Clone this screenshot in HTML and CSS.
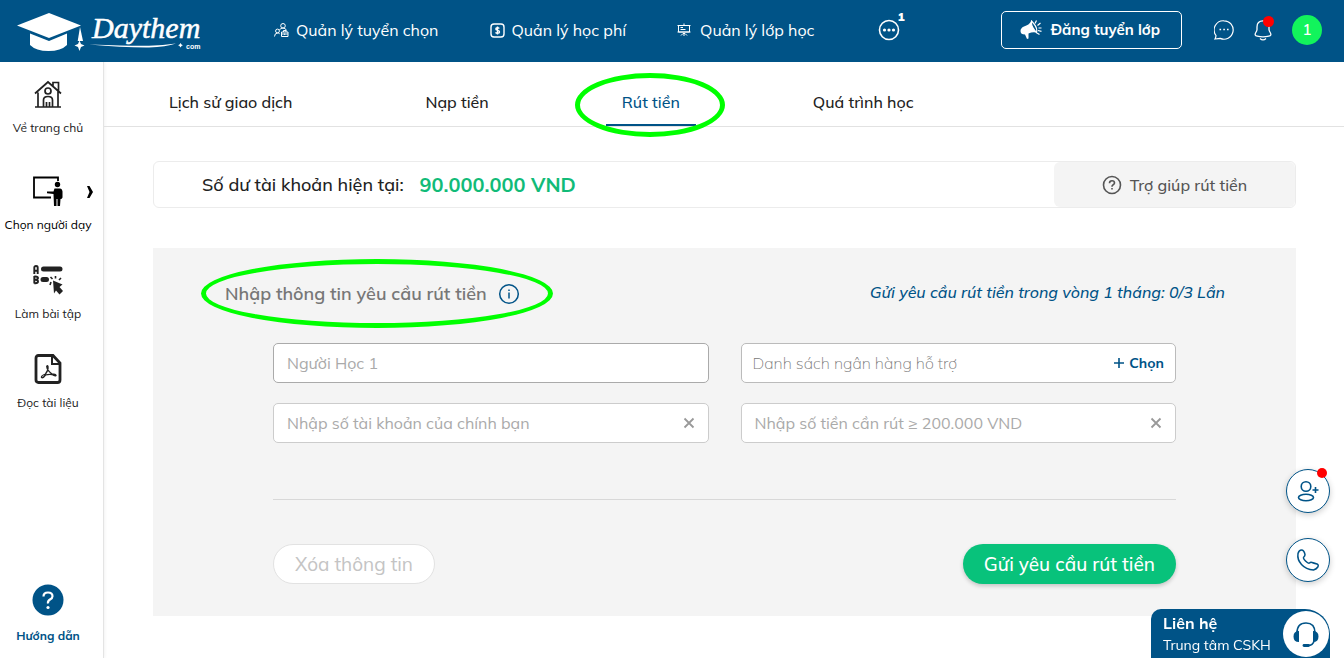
FILE: index.html
```html
<!DOCTYPE html>
<html lang="vi">
<head>
<meta charset="utf-8">
<meta name="viewport" content="width=device-width, initial-scale=1">
<title>Daythem.com - Rút tiền</title>
<link rel="stylesheet" href="styles.css">
</head>
<body>
<header class="topbar">
  <a class="logo" href="#" aria-label="Daythem.com">
    <svg class="logo-art" width="190" height="44" viewBox="14 6 190 44" fill="#fff">
      <path d="M17 23.500 49 11l32 12.500L49 36z"/>
      <path d="M30 31.500l19 7.500 18-7.500V43q-6 6-18.500 6T30 43z"/>
      <path d="M80 25l-2.300 14h5.300z"/>
      <path d="M79.500 38.500l1.500 3.500 3.500 1.500-3.500 1.500-1.500 4-1.500-4-3.500-1.500 3.500-1.500z"/>
      <path d="M89 42.500q42 1.500 60 1.200 14-.4 27-2.200-10 3.500-27 4-25 .2-60-3zM180.500 41l1 1.600 1.400.6-1.400.7-1 1.600-1-1.600-1.400-.7 1.400-.6z"/>
      <text class="logo-name" x="92" y="36">Daythem</text>
      <text class="logo-com" x="186" y="47">com</text>
    </svg>
  </a>
  <nav class="mainnav">
    <a href="#"><svg width="15" height="15" viewBox="0 0 15 15" fill="none" stroke="#fff"><circle cx="9" cy="2.800" r="2.300"/><circle cx="3.500" cy="8" r="1.900"/><path d="M.5 13.500q.2-3.500 3-3.500 1.400 0 2.200.8M5.500 7q.8-2 3.500-2t3.500 2.500M7.500 9h6.500v4.500H7.500zM9.500 9V7.500H12V9M7.500 11H14M10.700 10.500v1.500"/></svg>Quản lý tuyển chọn</a>
    <a href="#"><svg width="15" height="15" viewBox="0 0 15 15" fill="none" stroke="#fff" stroke-width="1.400"><rect x="1" y="1" width="13" height="13" rx="3"/><path d="M9.300 5.500q-.5-.8-1.800-.8-1.700 0-1.700 1.300 0 1.100 1.800 1.400 1.900.3 1.900 1.600t-2 1.400q-1.400 0-1.900-1M7.500 3.500v8"/></svg>Quản lý học phí</a>
    <a href="#"><svg width="16" height="14" viewBox="0 0 16 14" fill="none" stroke="#fff"><path d="M7 .5V2M1.500 2.500h11v6.500h-11zM.5 2.500h13M.5 9h13M3.500 4.500H6M3.500 6.500h5"/><path d="M4 12.500l2-2h2l2 2M7 10v3"/></svg>Quản lý lớp học</a>
  </nav>
  <button class="more" type="button" aria-label="Thêm">
    <svg width="22" height="22" viewBox="0 0 22 22" fill="none" stroke="#fff" stroke-width="1.600"><circle cx="11" cy="11" r="9.500"/><g fill="#fff" stroke="none"><circle cx="6.500" cy="11" r="1.600"/><circle cx="11" cy="11" r="1.600"/><circle cx="15.500" cy="11" r="1.600"/></g></svg>
    <span class="more-count">1</span>
  </button>
  <button class="post" type="button">
    <svg width="22" height="20" viewBox="0 0 22 20" fill="#fff"><path d="M.5 11q0-3 3.500-4.500Q9 5 11.500 1l5 11.500q-4-1-8 1v5L7 19l-2-4.500q-4.500 0-4.500-3.500z"/><path d="M11.500 1q-1 5 5 11.500 1.500-5-5-11.500z" fill="#005387" stroke="#fff" stroke-width="1.200"/><path d="M15 3.500l1.500-3M17.500 5.500l3-2.500M18.500 8h3M18 10.500l3.500.8M17 13l2.500 1.500" stroke="#fff" stroke-width="1.200"/></svg>
    Đăng tuyển lớp
  </button>
  <div class="tools">
    <button class="tool" type="button" aria-label="Tin nhắn"><svg width="20" height="20" viewBox="0 0 20 20" fill="none" stroke="#fff" stroke-width="1.200"><path d="M10 .8a9.200 9.200 0 1 1-3.800 17.600Q5 18.800 1 19q1-2 1-3.500A9.200 9.200 0 0 1 10 .8z"/><path d="M5.500 9.500h1.600M9.300 9.500h1.600M13 9.500h1.600" stroke-width="1.600"/></svg></button>
    <button class="tool" type="button" aria-label="Thông báo"><svg width="18" height="21" viewBox="0 0 18 21" fill="none" stroke="#fff" stroke-width="1.300"><path d="M9 .8Q3 .8 3 7v2.500q0 1.200-1.200 3-1.800 3 1.400 3.700 5.800 1.200 11.600 0 3.200-.7 1.400-3.700-1.200-1.800-1.200-3V7Q15 .8 9 .8zM6 18.500q3 2.800 6 0"/></svg><span class="dot dot-bell"></span></button>
    <button class="avatar" type="button" aria-label="Tài khoản 1">1</button>
  </div>
</header>

<div class="shell">
  <aside class="sidebar">
    <nav class="sidenav">
      <a class="side side-home" href="#"><svg width="30" height="30" viewBox="0 0 30 30" fill="none" stroke="#222" stroke-width="1.700"><path d="M2 28h26M5 28V13.500M25 28V12M2 14.500 15 3l13 11.500M20 7V3.500h5.500V12M10.500 28V21q0-3.500 4.500-3.500t4.500 3.500v7M13.500 28v-5M16.500 28v-5"/><circle cx="15" cy="12" r="3"/></svg>Về trang chủ</a>
      <a class="side side-teacher" href="#"><svg width="30" height="30" viewBox="0 0 30 30"><path d="M25 5V1.500H1V21.500h17" fill="none" stroke="#000" stroke-width="1.800"/><circle cx="24.500" cy="8.500" r="2.700"/><path d="M14 15.500h6.500l1-3h5.500q2 0 2.500 3v6q-.5 1.500-2 1.500l-.5 7h-2.500v-7h-1v7h-2.500l-.5-12-6.500-.8z"/></svg><svg class="chevron" width="6" height="12" viewBox="0 0 6 12"><path d="M0 0h2.500L6 6l-3.500 6H0l2.500-6z"/></svg>Chọn người dạy</a>
      <a class="side" href="#"><svg width="30" height="30" viewBox="0 0 30 30" fill="none" stroke="#222"><path d="M1.300 9V2.500q0-1.500 1.700-1.500T4.700 2.500V9M1.300 5.800h3.400M1.300 11v7.500M1.300 11.500h1q2.700 0 2.700 1.600t-2.700 1.600h-1 1q2.700 0 2.700 1.700T2.300 18.200h-1" stroke-width="1.900"/><path d="M10.500 4h16.500M10 14.500h3.500" stroke-width="5" stroke-linecap="round"/><path d="M17 20l1-3M19.500 14l-2-2M22.500 13.500V11M26 15l2-2" stroke-width="1.600"/><path d="M20 15.500l9.500 4-3 2.500 3.500 4-3.500 3.500-3.500-4-2 3z" fill="#222" stroke="none"/></svg>Làm bài tập</a>
      <a class="side" href="#"><svg width="30" height="30" viewBox="0 0 30 30" fill="none" stroke="#222"><path d="M5.500 1.500H20L27 9v17q0 2.500-2.500 2.500h-19Q3 28.500 3 26V4q0-2.500 2.500-2.500z" stroke-width="2.800"/><path d="M19 2v8h8" stroke-width="2"/><path d="M8.500 23.500q-.5-2 4-3.500 3-4 2.500-7.500-.6-1.500-1.300 0 .4 4 5.300 7.500 3.500 0 4 1.500-1 1-4-1-3-.5-6.500.5-2.500 3.500-4 2.500z" stroke-width="1.300"/></svg>Đọc tài liệu</a>
    </nav>
    <a class="side side-guide" href="#"><svg width="32" height="32" viewBox="0 0 32 32"><circle cx="16" cy="16" r="15.500" fill="#005387"/><path d="M11.500 12.500Q11.500 8.500 16 8.500t4.500 3.700Q20.500 14 18 15.500T16 19.500" fill="none" stroke="#fff" stroke-width="2.200"/><circle cx="16" cy="23.500" r="1.600" fill="#fff"/></svg>Hướng dẫn</a>
  </aside>

  <main class="main">
    <nav class="tabs">
      <a class="tab" href="#">Lịch sử giao dịch</a>
      <a class="tab" href="#">Nạp tiền</a>
      <a class="tab tab-active" href="#" aria-current="page">Rút tiền<span class="ring ring-tab"></span></a>
      <a class="tab" href="#">Quá trình học</a>
    </nav>

    <div class="content">
      <section class="balance">
        <p class="balance-text">Số dư tài khoản hiện tại: <strong>90.000.000 VND</strong></p>
        <button class="help" type="button"><svg width="20" height="20" viewBox="0 0 20 20" fill="none" stroke="#555" stroke-width="1.600"><circle cx="10" cy="10" r="8.500"/><path d="M7.500 8.200Q7.500 5.800 10 5.800t2.500 2.200q0 1-1.300 1.800T10 11.800M10 13v1.500"/></svg>Trợ giúp rút tiền</button>
      </section>

      <form class="panel">
        <div class="panel-head">
          <h1 class="title">Nhập thông tin yêu cầu rút tiền<svg width="22" height="22" viewBox="0 0 22 22" fill="none" stroke="#005387" stroke-width="1.500"><circle cx="11" cy="11" r="9.300"/><path d="M11 9.500v6M11 6.500v1.500" stroke-width="1.500"/></svg><span class="ring ring-title"></span></h1>
          <p class="quota">Gửi yêu cầu rút tiền trong vòng 1 tháng: 0/3 Lần</p>
        </div>
        <div class="panel-body">
          <div class="fields">
            <div class="field field-strong"><input type="text" placeholder="Người Học 1" aria-label="Người học"></div>
            <div class="field field-strong field-bank"><input type="text" placeholder="Danh sách ngân hàng hỗ trợ" aria-label="Ngân hàng"><button class="choose" type="button"><svg width="12" height="12" viewBox="0 0 12 12" stroke="#005387" stroke-width="1.600"><path d="M6 1v10M1 6h10"/></svg>Chọn</button></div>
            <div class="field"><input type="text" placeholder="Nhập số tài khoản của chính bạn" aria-label="Số tài khoản"><button class="clear" type="button" aria-label="Xóa số tài khoản"><svg width="12" height="12" viewBox="0 0 12 12" stroke="#999" stroke-width="1.800"><path d="M1.500 1.500l9 9M10.500 1.500l-9 9"/></svg></button></div>
            <div class="field"><input type="text" placeholder="Nhập số tiền cần rút ≥ 200.000 VND" aria-label="Số tiền"><button class="clear" type="button" aria-label="Xóa số tiền"><svg width="12" height="12" viewBox="0 0 12 12" stroke="#999" stroke-width="1.800"><path d="M1.500 1.500l9 9M10.500 1.500l-9 9"/></svg></button></div>
          </div>
          <div class="actions">
            <button class="pill pill-reset" type="reset">Xóa thông tin</button>
            <button class="pill pill-send" type="button">Gửi yêu cầu rút tiền</button>
          </div>
        </div>
      </form>
    </div>
  </main>
</div>

<div class="floating">
  <button class="round" type="button" aria-label="Thêm bạn"><svg width="24" height="24" viewBox="0 0 24 24" fill="none" stroke="#005387" stroke-width="1.600"><circle cx="10" cy="7.500" r="4.800"/><ellipse cx="10" cy="18.500" rx="7.500" ry="3.200"/><path d="M19.500 8v6M16.500 11h6"/></svg><span class="dot dot-round"></span></button>
  <button class="round" type="button" aria-label="Gọi điện"><svg width="24" height="24" viewBox="0 0 24 24" fill="none" stroke="#005387" stroke-width="1.500"><path d="M2 5.500Q3 2 5.500 2T9 6.500q0 1.500-1.200 2.500t1.700 4q3 3 4 2t2.500-.5 5 1.500q2 1 .8 3T17.500 22Q10 21.500 5.500 16.500T2 5.500z"/></svg></button>
  <button class="contact" type="button">
    <span class="contact-text"><strong>Liên hệ</strong><span>Trung tâm CSKH</span></span>
    <span class="contact-icon"><svg width="28" height="28" viewBox="0 0 28 28" fill="none" stroke="#005387"><path d="M5 13Q5 3 14 3t9 10" stroke-width="1.600"/><path d="M7 11v11q-5.500 0-5.500-5.500T7 11zM21 11v11q5.500 0 5.500-5.500T21 11z" fill="#005387" stroke="none"/><path d="M22 21q-1 4.500-6 4.500" stroke-width="1.600"/><path d="M12 25.500h4.500" stroke-width="2.800" stroke-linecap="round"/></svg></span>
  </button>
</div>
</body>
</html>
```

FILE: styles.css
```css
* { box-sizing: border-box; }

body {
  margin: 0;
  min-height: 100vh;
  display: flex;
  flex-direction: column;
  background: #fff;
  color: #222;
  font: 16px/20px Mulish, Muli, Lato, "Noto Sans", sans-serif;
}

a { color: inherit; text-decoration: none; }

button {
  margin: 0;
  padding: 0;
  border: 0;
  background: none;
  color: inherit;
  font: inherit;
  cursor: pointer;
}

p, h1 { margin: 0; }
svg { display: block; flex: none; }

/* Header */
.topbar {
  display: flex;
  align-items: center;
  height: 62px;
  padding: 0 22px 2px 14px;
  background: #005387;
  color: #fff;
}

.logo-name { font: italic 400 30px "Liberation Serif", serif; stroke: #fff; stroke-width: 0.5px; }
.logo-com { font: 700 7px "Liberation Sans", sans-serif; }

.mainnav { display: flex; gap: 51px; margin-left: 70px; }
.mainnav a { display: flex; align-items: center; gap: 7px; white-space: nowrap; }

.more { position: relative; margin-left: 64px; }
.more-count {
  position: absolute;
  top: -10px;
  left: 19px;
  font-size: 12px;
  line-height: 16px;
  font-weight: 900;
}

.post {
  display: flex;
  align-items: center;
  gap: 9px;
  height: 38px;
  margin-left: auto;
  padding: 0 21px 0 18px;
  border: 1px solid #fff;
  border-radius: 5px;
  font-size: 15px;
  font-weight: 700;
  white-space: nowrap;
}

.tools { display: flex; align-items: center; gap: 20px; margin-left: 32px; }
.tool { position: relative; }
.avatar {
  width: 30px;
  height: 30px;
  border-radius: 50%;
  background: #12f45c;
  font-size: 15px;
  font-weight: 600;
}

.dot {
  position: absolute;
  width: 10px;
  height: 10px;
  border-radius: 50%;
  background: #f00;
}
.dot-bell { top: -4px; right: -2px; width: 11px; height: 11px; }
.dot-round { top: -2px; right: 2px; }

/* Sidebar */
.shell { display: flex; flex: 1; }

.sidebar {
  display: flex;
  flex-direction: column;
  justify-content: space-between;
  flex: none;
  width: 104px;
  padding: 17px 0 14px;
  border-right: 1px solid #e4e4e4;
  box-shadow: 1px 0 3px #0000000d;
}
.sidenav { display: flex; flex-direction: column; gap: 32px; }
.side {
  position: relative;
  display: flex;
  flex-direction: column;
  align-items: center;
  gap: 11px;
  padding-right: 7px;
  font-size: 12px;
  line-height: 16px;
  white-space: nowrap;
}
.side-home { margin-bottom: 8px; }
.side-teacher { color: #000; }
.side-guide { gap: 12px; color: #005387; font-weight: 700; }
.chevron { position: absolute; top: 10px; right: 10px; }

/* Tabs */
.main { flex: 1; min-width: 0; }

.tabs {
  display: flex;
  gap: 101px;
  height: 65px;
  padding: 0 49px;
  border-bottom: 1px solid #e2e2e2;
}
.tab {
  position: relative;
  display: flex;
  align-items: center;
  padding: 18px 16px 0;
  border-bottom: 2px solid transparent;
  font-weight: 500;
  white-space: nowrap;
}
.tab-active { border-bottom-color: #005387; color: #005387; }

.ring {
  position: absolute;
  border: 5px solid #0f0;
  border-radius: 50%;
  pointer-events: none;
}
.ring-tab { inset: 11px -29px -13px -31px; }
.ring-title { inset: -23px -33px -22px -24px; }

/* Balance */
.content { padding: 34px 48px 42px 49px; }

.balance {
  display: flex;
  height: 47px;
  border: 1px solid #ececec;
  border-radius: 6px;
}
.balance-text {
  display: flex;
  align-items: center;
  gap: 16px;
  flex: 1;
  padding-left: 48px;
  font-size: 18px;
  font-weight: 500;
}
.balance-text strong { color: #11bb78; font-size: 20px; font-weight: 700; }
.help {
  display: flex;
  align-items: center;
  justify-content: center;
  gap: 8px;
  width: 241px;
  border-radius: 6px;
  background: #f4f4f4;
  color: #555;
  font-weight: 500;
}

/* Withdrawal form */
.panel { margin-top: 40px; padding: 34px 71px 32px 72px; background: #f4f4f4; }
.panel-head { display: flex; justify-content: space-between; align-items: flex-start; }
.title {
  position: relative;
  display: flex;
  align-items: center;
  gap: 11px;
  color: #777;
  font-size: 18px;
  line-height: 24px;
  font-weight: 600;
}
.quota { color: #005387; font-style: italic; font-weight: 500; }

.panel-body { padding: 37px 49px 0 48px; }
.fields {
  display: grid;
  grid-template-columns: 1fr 1fr;
  gap: 20px 32px;
  padding-bottom: 56px;
  border-bottom: 1px solid #d8d8d8;
}
.field {
  display: flex;
  align-items: center;
  height: 40px;
  padding: 0 13px;
  border: 1px solid #ccc;
  border-radius: 5px;
  background: #fff;
}
.field-strong { border-color: #aaa; }
.field-bank { padding: 0 11px; border-color: #bbb; }
.field input {
  flex: 1;
  min-width: 0;
  padding: 0;
  border: 0;
  outline: 0;
  background: none;
  font: inherit;
}
.field input::placeholder { color: #aaa; opacity: 1; }
.field-bank input { font-weight: 200; }
.field-bank input::placeholder { color: #777; }
.choose {
  display: flex;
  align-items: center;
  gap: 4px;
  color: #005387;
  font-size: 14px;
  font-weight: 700;
}

.actions { display: flex; justify-content: space-between; padding-top: 44px; }
.pill { height: 40px; padding: 0 21px; border-radius: 20px; font-size: 19px; }
.pill-reset { border: 1px solid #e2e2e2; background: #fff; color: #c4c4c4; }
.pill-send {
  background: #08c27b;
  color: #fff;
  font-weight: 500;
  box-shadow: 0 2px 4px #0003;
}

/* Floating controls over the page */
.floating {
  position: fixed;
  right: 14px;
  bottom: 0;
  display: flex;
  flex-direction: column;
  align-items: flex-end;
  gap: 25px;
}
.round {
  position: relative;
  display: grid;
  place-items: center;
  width: 44px;
  height: 44px;
  border: 1px solid #005387;
  border-radius: 50%;
  background: #fff;
  box-shadow: 0 2px 6px #0003;
}
.contact {
  display: flex;
  align-items: center;
  justify-content: space-between;
  width: 179px;
  height: 49px;
  margin-top: 2px;
  padding: 0 1px 0 12px;
  border-radius: 10px 25px 0 0;
  background: #005387;
  color: #fff;
  text-align: left;
}
.contact-text { display: flex; flex-direction: column; font-size: 14px; line-height: 22px; white-space: nowrap; }
.contact-text strong { font-size: 16px; }
.contact-icon {
  display: grid;
  place-items: center;
  width: 46px;
  height: 46px;
  border-radius: 50%;
  background: #fff;
}
```
